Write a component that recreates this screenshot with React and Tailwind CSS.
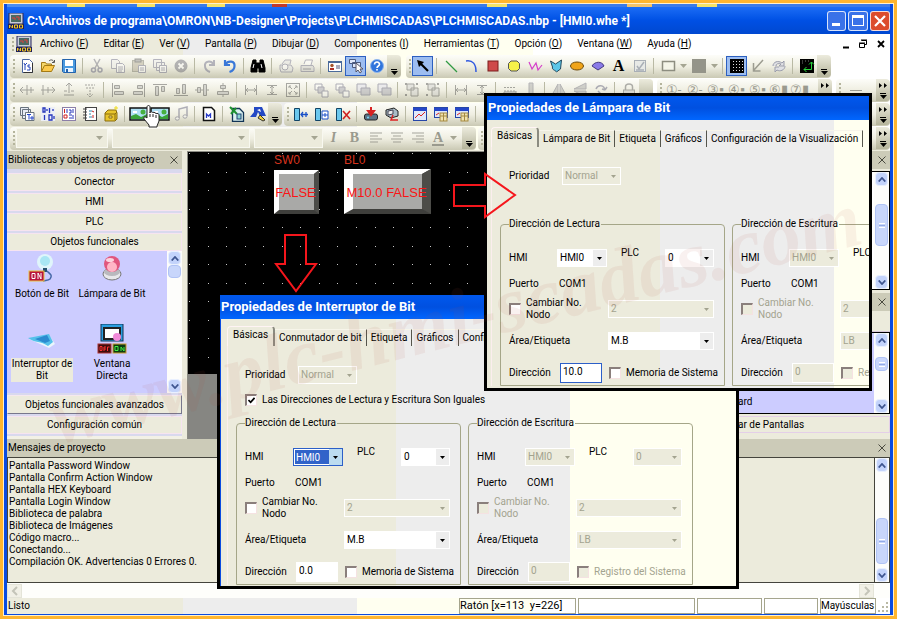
import React, { useId } from "react";

const Svg = ({ children, dim }) => (
  <svg viewBox="0 0 16 16" className={dim ? "h-4 w-4 opacity-40" : "h-4 w-4"} fill="none" stroke="#222" strokeWidth="1">
    {children}
  </svg>
);

const G = "#85857c";

const icons = {
  new: <Svg><path d="M3.5 1.5h7l3 3v10h-10z" fill="#fff" stroke="#4a66a0" /><path d="M13.5 5v9.500h-9" stroke="#333" /><path d="M5 5l1 2 2-2M6 7v5M9 7v2h2v3H8M11 7h-2" stroke="#2244bb" /></Svg>,
  open: <Svg><path d="M1.500 13.500v-9h4l1 1.500h5v2" fill="#f5d76a" stroke="#a47a14" /><path d="M1.500 13.500l3-6h10l-3 6z" fill="#fbc94b" stroke="#a47a14" /><path d="M9 3c2-2 4-1 5 1M14.500 2v2.500H12" stroke="#555" /></Svg>,
  save: <Svg><path d="M1.500 1.500h13v13h-12l-1-1z" fill="#4b9be0" stroke="#2463ac" /><rect x="4" y="2" width="8" height="6" fill="#fff" stroke="none" /><rect x="4" y="10" width="8" height="4" fill="#e8f3ff" stroke="none" /><rect x="5" y="11" width="2" height="3" fill="#2463ac" stroke="none" /></Svg>,
  cut: <Svg dim><path d="M5 1l5 9M11 1L6 10" stroke="#556" strokeWidth="1.500" /><circle cx="4.500" cy="12" r="2" stroke="#446" strokeWidth="1.500" /><circle cx="11" cy="12" r="2" stroke="#446" strokeWidth="1.500" /></Svg>,
  copy: <Svg dim><path d="M1.500 1.500h6l2 2v7h-8z" fill="#eee" stroke="#557" /><path d="M6.500 5.500h6l2 2v7h-8z" fill="#fff" stroke="#557" /><path d="M8 9h5M8 11h5M8 13h4" stroke="#557" /></Svg>,
  paste: <Svg dim><rect x="1.500" y="2.500" width="11" height="11" fill="#a9a089" stroke="#665" /><rect x="4" y="1" width="6" height="3" fill="#777" /><path d="M7.500 7.500h7v7h-7z" fill="#fff" stroke="#557" /><path d="M9 10h4M9 12h4" stroke="#557" /></Svg>,
  multi: <Svg dim><path d="M1.500 1.500h8v8h-8zM4.500 4.500h8v8h-8z" fill="#eee" stroke="#557" /><path d="M7.500 7.500h7v7h-7z" fill="#fff" stroke="#557" /><path d="M9 10h4M9 12h4" stroke="#557" /></Svg>,
  del: <Svg dim><circle cx="8" cy="8" r="6" fill="#556" stroke="#445" /><path d="M5.500 5.500l5 5M10.500 5.500l-5 5" stroke="#fff" strokeWidth="1.800" /></Svg>,
  redo: <Svg dim><path d="M13 2v5H8M12.500 6.500C10 2 3 3 4 8c0 3 2 5 5 6" stroke="#557" strokeWidth="2" /></Svg>,
  undo: <Svg><path d="M3 2v5h5M3.500 6.500C6 2 13 3 12.500 8c0 3-2 5-5 6" stroke="#3a78d8" strokeWidth="2.200" /></Svg>,
  find: <Svg><path d="M3 2h3v3h4V2h3l2 8v4H9v-4H7v4H1v-4z" fill="#000" stroke="#000" /><path d="M4 6l-1 4M11 6l1 4" stroke="#fff" /></Svg>,
  preview: <Svg dim><path d="M4 6l3-4h6l-1 4M2 7h11l2 3-1 4H3l-1-3z" fill="#ddd" stroke="#557" /><circle cx="7" cy="9" r="3" fill="#fff" stroke="#557" /></Svg>,
  print: <Svg dim><path d="M5 6l1.500-4h7L12 7" fill="#fff" stroke="#557" /><path d="M2 7.500h12l1 2v4H2z" fill="#ccc" stroke="#557" /><path d="M4 11h8" stroke="#334" /></Svg>,
  card: <Svg><rect x="1.500" y="3.500" width="13" height="10" fill="#fff" stroke="#4a6a9a" /><path d="M2 4.500h12" stroke="#4a6a9a" /><circle cx="5" cy="7.500" r="1.700" fill="#a4552d" stroke="none" /><path d="M3 12v-2h4v2z" fill="#b03028" stroke="none" /><path d="M9 8h4M9 10h4" stroke="#557" /></Svg>,
  select: <Svg><path d="M1.500 1.500h6v4h-6zM4.500 4.500h8v5h-8z" fill="#dfe8fa" stroke="#4a5a80" /><path d="M8 5l7 6h-3l1.500 3-1.500 1-2-3-2 2z" fill="#fff" stroke="#556" /></Svg>,
  help: <Svg><circle cx="8" cy="8" r="6.500" fill="#2f74dc" stroke="#8fb6ee" /><path d="M5.500 6.500c0-3.500 5-3 5 0 0 1.500-2.500 1.500-2.500 3.500" stroke="#fff" strokeWidth="1.600" /><rect x="7.200" y="11" width="1.600" height="1.600" fill="#fff" stroke="none" /></Svg>,
  pointer: <Svg><path d="M5 5l8 8" stroke="#000" strokeWidth="2.200" /><path d="M2 2l7 2-5 5z" fill="#000" stroke="none" /></Svg>,
  line: <Svg><path d="M3 3l11 11" stroke="#2f9a42" strokeWidth="1.300" /></Svg>,
  arc: <Svg><path d="M2 3c7-1 10 3 10 11" stroke="#2f58e0" strokeWidth="1.500" /></Svg>,
  rect: <Svg><rect x="3" y="3" width="10" height="10" fill="#cf4a4a" stroke="#7a1d1d" /></Svg>,
  rrect: <Svg><path d="M5 3h6l2.500 2.500v5L11 13H5l-2.500-2.500v-5z" fill="#f7f14a" stroke="#555" /></Svg>,
  zig: <Svg><path d="M2 4l3 7 4-6 2 7 4-5" stroke="#d53ecb" strokeWidth="1.200" /></Svg>,
  poly: <Svg><path d="M2.500 3l5 3 6-4-1 9-4 3c-1-2-5-2-4-5z" fill="#5cc6e8" stroke="#234a60" /></Svg>,
  ellipse: <Svg><ellipse cx="8" cy="8" rx="6.500" ry="4" fill="#f0a419" stroke="#6d4a0a" /></Svg>,
  fan: <Svg><path d="M2 8c3-5 10-5 12 0l-6 4z" fill="#8a7ae8" stroke="#453a80" /></Svg>,
  edit: <Svg><rect x="2.500" y="2.500" width="11" height="11" fill="#e7e9e6" stroke="#a9afb6" /><path d="M5 8l2 3 5-7M4 12h8" stroke="#a9afb6" strokeWidth="1.500" /></Svg>,
  outline: <Svg><rect x="2.500" y="3.500" width="12" height="9" stroke="#8d8d80" strokeWidth="1.500" fill="#f4f4e8" /></Svg>,
  fill: <Svg><rect x="1" y="1" width="14" height="14" fill="#949489" stroke="none" /></Svg>,
  grid: <Svg><rect x="1" y="1" width="14" height="14" fill="#000" stroke="none" /><path d="M4.500 3v11M7.500 3v11M10.500 3v11M13.500 3v11" stroke="#ddd" strokeDasharray="1 2" /></Svg>,
  sw: <Svg><path d="M13 2L4 12M3.500 5v8h7" stroke="#9c9c90" strokeWidth="1.500" /></Svg>,
  refresh: <Svg><path d="M2 8c0-4 5-6 9-3l2-2v5H8l2-2C7 5 5 6 5 8M14 8c0 4-5 6-8 4l-2 2V9h4" fill="#dfe0e4" stroke="#9a9cab" /></Svg>,
  origin: <Svg><rect x="1" y="1" width="14" height="14" fill="#000" stroke="none" /><path d="M12.500 4v7.500H5M10 6.500L12.500 4 15 6.500M7.500 9L5 11.500 7.500 14" stroke="#27d33b" /><path d="M3 3h7M3 5h3" stroke="#777" strokeDasharray="1 2" /></Svg>,
  a1: <Svg dim><path d="M1 8h14M4 5L1 8l3 3M8 3v10M12 5v6" stroke="#333" /></Svg>,
  a2: <Svg dim><path d="M1 8h14M12 5l3 3-3 3M3 3v10M8 5v6" stroke="#333" /></Svg>,
  a3: <Svg dim><path d="M8 1v10M5 4l3-3 3 3M3 13h10M3 9h3M10 9h3" stroke="#333" /></Svg>,
  a4: <Svg dim><path d="M8 5v10M5 12l3 3 3-3M3 3h10M4 6h2M10 6h2" stroke="#333" strokeDasharray="2 1" /></Svg>,
  l1: <Svg dim><path d="M2.500 1v14" stroke="#333" /><path d="M4.500 3.500h5v3h-5zM4.500 9.500h9v3h-9z" fill="#aaa" stroke="#333" /></Svg>,
  l2: <Svg dim><path d="M13.500 1v14" stroke="#333" /><path d="M6.500 3.500h5v3h-5zM2.500 9.500h9v3h-9z" fill="#aaa" stroke="#333" /></Svg>,
  l3: <Svg dim><path d="M1 2.500h14" stroke="#333" /><path d="M3.500 4.500h3v9h-3zM9.500 4.500h3v5h-3z" fill="#aaa" stroke="#333" /></Svg>,
  l4: <Svg dim><path d="M1 13.500h14" stroke="#333" /><path d="M3.500 6.500h3v5h-3zM9.500 2.500h3v9h-3z" fill="#aaa" stroke="#333" /></Svg>,
  l5: <Svg dim><path d="M1 8h14" stroke="#333" /><path d="M3.500 5.500h3v5h-3zM9.500 2.500h3v11h-3z" fill="#aaa" stroke="#333" /></Svg>,
  l6: <Svg dim><path d="M8 1v14" stroke="#333" /><path d="M5.500 3.500h5v3h-5zM2.500 9.500h11v3h-11z" fill="#aaa" stroke="#333" /></Svg>,
  hsp: <Svg dim><path d="M2.500 3v10M13.500 3v10M3 8h10M5 6L3 8l2 2M11 6l2 2-2 2" stroke="#333" /></Svg>,
  vsp: <Svg dim><path d="M3 3.500h10M3 12.500h10M8 4v8M6 6l2-2 2 2M6 10l2 2 2-2" stroke="#333" /></Svg>,
  full: <Svg dim><rect x="1.500" y="1.500" width="13" height="13" stroke="#333" /><path d="M4 4l3 3M12 4L9 7M4 12l3-3M12 12L9 9M4 6V4h2M10 4h2v2M4 10v2h2M10 12h2v-2" stroke="#333" /></Svg>,
  z1: <Svg dim><path d="M2 2h7v6H2z" fill="#fff" stroke="#446" /><path d="M5 5h6v6H5z" fill="#99a" stroke="#446" /><path d="M9 9h6v6H9z" fill="#fff" stroke="#446" /></Svg>,
  z2: <Svg dim><path d="M2 2h9v8H2z" fill="#dde" stroke="#446" /><path d="M6 6h9v7H6z" fill="#99a" stroke="#446" /></Svg>,
  grp: <Svg dim><path d="M3 2h7v6H3zM7 6h7v8H7z" fill="#ccc" stroke="#333" /><path d="M1 1h2v2H1zM12 1h2v2h-2zM1 12h2v2H1z" fill="#333" stroke="none" /></Svg>,
  bars: <Svg dim><path d="M2 5.500h12M2 9h12v3H2z" fill="#888" stroke="#333" strokeDasharray="2 1" /></Svg>,
  vbar: <Svg dim><path d="M6 1h4v11H6zM2 14h12" fill="#999" stroke="#556" /></Svg>,
  flipH: <Svg dim><path d="M7 2v11H1zM9 2v11h6z" fill="#999" stroke="#556" /></Svg>,
  flipV: <Svg dim><path d="M2 7h12V1zM2 9h12v6z" fill="#999" stroke="#556" /></Svg>,
  rot: <Svg dim><path d="M3 7c2-5 8-4 9 1M12 8l-3-1M12 8l2-3M5 9l5 5" stroke="#446" strokeWidth="1.500" /></Svg>,
  lock: <Svg dim><path d="M4.500 8V5c0-4 7-4 7 0v3" stroke="#444" strokeWidth="1.500" /><rect x="2.500" y="8" width="11" height="7" fill="#bbb" stroke="#444" /></Svg>,
  textlib: <Svg><path d="M1.500 1.500h8v8h-8zM3.500 3.500h8v9h-8z" fill="#e8ecf4" stroke="#69737e" /><path d="M6.500 6.500h8.500v8h-8.500z" fill="#fff" stroke="#69737e" /><path d="M8 8.500h4M10 8.500v5M12 11h2v2h-2z" stroke="#2244cc" /></Svg>,
  addr: <Svg><rect x="1" y="1" width="14" height="14" fill="#eceef6" stroke="none" /><path d="M3 2h2v4H3zM9.500 2v5M9 9h3v5H9zM4.500 9v5M7 3v2M13 3v2M14 10v3" stroke="#2636bb" strokeWidth="1.300" /></Svg>,
  data: <Svg><rect x="1.500" y="1.500" width="13" height="13" fill="#fff" stroke="#8c7fa8" /><path d="M3.500 3v4M3 9h3v3H3z" stroke="#d02222" /><path d="M6 3v4M8 4h2v3H8M12 3v4M8 9h3M8 12h5M12 9v2" stroke="#2636bb" /></Svg>,
  note: <Svg><rect x="3.500" y="1.500" width="11" height="13" fill="#fff" stroke="#444" /><path d="M1 3h4M1 6h4M1 9h4M1 12h4" stroke="#444" /><path d="M7 5h3M7 8h2M7 11h3" stroke="#38a" /><path d="M10 5l2 1M11 9v3" stroke="#c22" /></Svg>,
  box: <Svg><path d="M2 7l3-3h8l1 3v6l-2 2H2z" fill="#e8c52c" stroke="#8a6c0e" /><path d="M2 8h10v6M12 8l2-2" stroke="#8a6c0e" /><path d="M6 10h3v2H6z" fill="#fff7b0" stroke="#8a6c0e" /><path d="M13 0v4M11 2h4" stroke="#eedb20" /></Svg>,
  pic: <svg viewBox="0 0 20 14" className="h-[14px] w-5 shrink-0"><rect x="1" y="1" width="18" height="12" fill="#aee0f4" stroke="#111" strokeWidth="1.500" /><path d="M2 12V9l5-2 5 3 6-3v5z" fill="#3aa53a" /><circle cx="14" cy="5" r="2.500" fill="#47b040" /><path d="M4 5h4" stroke="#fff" strokeWidth="2" /></svg>,
  music: <Svg dim><path d="M6 12V3l8-2v9" stroke="#446" strokeWidth="1.500" /><ellipse cx="4.300" cy="12.500" rx="2" ry="1.700" fill="#fff" stroke="#446" /><ellipse cx="12" cy="10.500" rx="2" ry="1.700" fill="#fff" stroke="#446" /></Svg>,
  macro: <Svg><path d="M2.500 1.500h8l3 3v10h-11z" fill="#fff" stroke="#111" strokeWidth="1.500" /><path d="M5.500 12V8l2 2 2-2v4" stroke="#2438c8" strokeWidth="1.300" /></Svg>,
  xls: <Svg><path d="M3.500 2.500h7l4 4v9h-11z" fill="#d9f1ef" stroke="#135" strokeWidth="1.300" /><path d="M1 1l7 7M7 2L2 8" stroke="#1d9030" strokeWidth="2" /><rect x="8" y="8" width="4" height="5" fill="#8ad4d0" stroke="#247" /></Svg>,
  shapes: <Svg><path d="M4 1h8l4 9H10L8 6l-2 5H0l4-5z" fill="#2348c4" stroke="none" /><path d="M7 4l3-1 1 3z" fill="#fff" stroke="none" /><path d="M10 9l5 5-2 1-5-3z" fill="#f2cf3c" stroke="#333" /></Svg>,
  win1: <Svg><path d="M1.500 2.500h5v12h-5z" fill="#6cc8ee" stroke="#146" /><path d="M8 8.500h7M10 6l-2 2.500 2 2.500M13 6v5" stroke="#1a50c8" strokeWidth="1.300" /></Svg>,
  win2: <Svg><path d="M1.500 2.500h5v12h-5z" fill="#6cc8ee" stroke="#146" /><path d="M8 5h6v8H8zM8 9h6M11 7v4" fill="#fff" stroke="#1a50c8" /></Svg>,
  win3: <Svg><path d="M1.500 2.500h5v12h-5z" fill="#6cc8ee" stroke="#146" /><path d="M8 5l7 8M15 5l-7 8" stroke="#cf2020" strokeWidth="1.600" /></Svg>,
  down: <Svg><rect x="1.500" y="8" width="13" height="6" rx="2" fill="#5d7284" stroke="#222" /><path d="M8 1v5M5 5l3 4 3-4z" fill="#d82222" stroke="#d82222" strokeWidth="2" /><circle cx="5" cy="11.500" r="1" fill="#7df" stroke="none" /></Svg>,
  sim: <Svg><path d="M2 4l8-2 4 3v5l-7 2-5-3z" fill="#a9bcc6" stroke="#222" /><path d="M4 5l5-1v4l-5 1z" fill="#eee" stroke="#445" /><path d="M9 9l-2 5h7" stroke="#d22" strokeWidth="1.500" /></Svg>,
  c1: <Svg><rect x="1.500" y="1.500" width="13" height="13" fill="#dfe8fa" stroke="#2546a8" /><path d="M1 3.500h14" stroke="#2546c8" strokeWidth="3" /><path d="M3 12l4-4 2 2 4-4" stroke="#d22" /></Svg>,
  c2: <Svg><rect x="1.500" y="1.500" width="13" height="10" fill="#dfe8fa" stroke="#2546a8" /><path d="M1 3.500h14" stroke="#2546c8" strokeWidth="3" /><rect x="7" y="7" width="7" height="8" fill="#efe2b0" stroke="#a58a40" /><path d="M3 9l3-2" stroke="#d22" /><path d="M7 10h7M10.500 7v8" stroke="#a58a40" /></Svg>,
  letter: <span className="font-['Liberation_Serif'] text-[16px] font-bold">A</span>,
};

const Slot = ({ name, active }) => (
  <button
    type="button"
    aria-label={name}
    className={
      active
        ? "flex h-5 w-[21px] shrink-0 items-center justify-center border border-[#2c5fc0] bg-[#9dbdf0]"
        : "flex h-5 w-[21px] shrink-0 items-center justify-center"
    }
  >
    {icons[name]}
  </button>
);
const Sep = () => (
  <span className="flex w-[7px] shrink-0 justify-center">
    <span className="h-4 w-px bg-[#b9b9a4]" />
  </span>
);
const Grip = () => (
  <span className="flex w-1 shrink-0 flex-col items-center gap-[2px]">
    {[0, 1, 2, 3].map((i) => (
      <span key={i} className="h-[2px] w-[2px] bg-[#b4b49c]" />
    ))}
  </span>
);
const Tri = ({ dark }) => (
  <svg viewBox="0 0 7 4" className="h-1 w-[7px]">
    <path d="M0 0h7L3.500 4z" fill={dark ? "#000" : "#a5a592"} />
  </svg>
);
const Drop = () => (
  <span className="flex w-[10px] shrink-0 justify-center">
    <Tri />
  </span>
);
const More = ({ wide }) => (
  <button type="button" aria-label="Más botones" className="flex h-[22px] w-[14px] shrink-0 flex-col items-center justify-end gap-px rounded-r bg-gradient-to-b from-[#ecebdd] to-[#b5b49b] pb-[2px]">
    {wide && (
      <svg viewBox="0 0 8 5" className="mb-1 h-[5px] w-2">
        <path d="M0 0l3 2.500L0 5zM5 0l3 2.500L5 5z" fill="#000" />
      </svg>
    )}
    <span className="h-px w-[6px] bg-black" />
    <Tri dark />
  </button>
);
const Bar = ({ items, children, grow, more = true, wide }) => (
  <div
    className={
      "flex h-[23px] items-center rounded bg-gradient-to-b from-[#fdfdf9] via-[#efeee1] to-[#cac9b4] pl-[2px] " +
      (grow ? "min-w-0 flex-1 overflow-hidden" : "shrink-0")
    }
  >
    <Grip />
    {items && items.split(" ").map((n, i) =>
      n === "|" ? <Sep key={i} /> : n === "v" ? <Drop key={i} /> : <Slot key={i} name={n.replace("*", "")} active={n.endsWith("*")} />
    )}
    {children}
    {grow && <span className="flex-1" />}
    {more && <More wide={wide} />}
  </div>
);

const AppIcon = () => (
  <svg viewBox="0 0 16 16" className="h-4 w-4 shrink-0">
    <rect x="1" y="0" width="14" height="11" fill="#c9ccd8" stroke="#22245a" />
    <rect x="3" y="2" width="10" height="7" fill="#4a6a62" />
    <path d="M4 5h3v2M8 4h3v3" stroke="#e03c3c" fill="none" />
    <rect x="0" y="11" width="16" height="5" fill="#20205a" />
    <path d="M1.500 15v-3l3 3v-3M6.500 12v3h3v-3zM11.500 12v3h3v-3z" stroke="#f2c820" fill="none" />
  </svg>
);

const Menu = ({ t, k }) => (
  <button type="button" className="whitespace-nowrap">
    {t} (<u>{k}</u>)
  </button>
);

const ScrollBtn = ({ up }) => (
  <button type="button" aria-label={up ? "Subir" : "Bajar"} className="flex h-[14px] w-full shrink-0 items-center justify-center rounded-sm border border-[#e9f0ff] bg-[#c3d3fb]">
    <svg viewBox="0 0 8 5" className="h-[5px] w-2">
      <path d={up ? "M.7 4.500L4 1l3.300 3.500" : "M.7.5L4 4 7.300.5"} stroke="#3e5590" strokeWidth="1.800" fill="none" />
    </svg>
  </button>
);
const Thumb = ({ className, plain }) => (
  <div className={"flex w-full shrink-0 flex-col items-center justify-center gap-px rounded-sm border border-[#b0c3f5] bg-[#c8d6fb] " + className}>
    {!plain && (
      <>
        <span className="h-px w-[6px] bg-white" />
        <span className="h-px w-[6px] bg-[#93abe8]" />
        <span className="h-px w-[6px] bg-white" />
      </>
    )}
  </div>
);
const Scroll = ({ pre, thumb, plain, className = "" }) => (
  <div className={"flex w-[15px] shrink-0 flex-col bg-[#fdfdfb] px-px " + className}>
    <ScrollBtn up />
    <div className={pre} />
    <Thumb className={thumb} plain={plain} />
    <div className="flex-1" />
    <ScrollBtn />
  </div>
);

const Close = () => (
  <button type="button" aria-label="Cerrar" className="flex h-4 w-4 items-center justify-center">
    <svg viewBox="0 0 8 8" className="h-2 w-2">
      <path d="M.5.5l7 7M7.500.5l-7 7" stroke="#4a4a40" fill="none" />
    </svg>
  </button>
);
const Head = ({ children, className = "" }) => (
  <div className={"flex h-[18px] shrink-0 items-center justify-between bg-[#cccbb8] pl-px " + className}>
    <h2 className="whitespace-nowrap">{children}</h2>
    <Close />
  </div>
);
const Section = ({ children, raised }) => (
  <button
    type="button"
    className={
      raised
        ? "h-[19px] w-full shrink-0 border border-[#f6e8ee] border-r-[#77778c] border-b-[#77778c] bg-[#ecebdc]"
        : "h-[18px] w-full shrink-0 border border-[#f6e4f0] bg-[#ecebdc]"
    }
  >
    {children}
  </button>
);

const Select = ({ label, value, className, off, focus }) => (
  <span className={"relative flex h-[18px] shrink-0 border " + (focus ? "border-[#2c5fc8] " : "border-white ") + className}>
    <select
      aria-label={label}
      disabled={off}
      className={
        "w-full appearance-none leading-4 opacity-100 outline-none " +
        (focus ? "border border-r-2 border-white bg-[#3163c9] pl-px text-white" : off ? "bg-[#ecebdc] pl-[2px] text-[#a3a38f]" : "bg-white pl-[2px] text-black")
      }
      defaultValue={value}
    >
      <option>{value}</option>
    </select>
    <span
      className={
        "pointer-events-none absolute inset-y-0 right-0 flex w-[13px] items-center justify-center " +
        (focus ? "bg-[#bcdcf0]" : off ? "" : "bg-[#ededed]")
      }
    >
      <svg viewBox="0 0 5 3" className="h-[3px] w-[5px]">
        <path d="M0 0h5L2.500 3z" fill={off ? "#a3a38f" : "#000"} />
      </svg>
    </span>
  </span>
);

const Check = ({ children, off, on, className = "" }) => {
  const id = useId();
  return (
    <span className={"flex shrink-0 items-center gap-[5px] " + className}>
      <span className="relative flex">
        <input
          id={id}
          type="checkbox"
          defaultChecked={on}
          disabled={off}
          className={"h-3 w-3 appearance-none border border-[#f5e2e2] border-t-[#8a7f7c] border-l-[#8a7f7c] border-t-2 border-l-2 " + (off ? "bg-[#ecebdc]" : "bg-white")}
        />
        {on && (
          <svg viewBox="0 0 8 8" className="pointer-events-none absolute top-[3px] left-[3px] h-[7px] w-[7px]">
            <path d="M.5 3.500L3 6l4.500-5" stroke="#000" strokeWidth="2" fill="none" />
          </svg>
        )}
      </span>
      <label htmlFor={id} className={"leading-3 whitespace-nowrap " + (off ? "text-[#a3a38f]" : "")}>
        {children}
      </label>
    </span>
  );
};

const Group = ({ title, off, area, addr, mem, hmiFocus, addrFocus }) => {
  const id = useId();
  return (
    <fieldset className="w-[225px] min-w-0 shrink-0 rounded-t border border-[#a5a688] pt-[14px] pl-2">
      <legend className="h-[14px] pr-px leading-[14px]">{title}</legend>
      <div className="flex h-[26px] items-center">
        <span className="w-12">HMI</span>
        <Select label="HMI" value="HMI0" off={off} focus={hmiFocus} className="w-[50px]" />
        <span className="w-[58px] self-start pl-[14px] leading-4">PLC</span>
        <Select label="PLC" value="0" off={off} className="w-[49px]" />
      </div>
      <div className="flex h-[26px] items-center">
        <span className="w-[50px]">Puerto</span>
        <span>COM1</span>
      </div>
      <div className="flex h-6 items-center">
        <Check off={off} className="w-[99px]">
          Cambiar No.
          <br />
          Nodo
        </Check>
        <Select label="Nodo" value="2" off className="w-[106px]" />
      </div>
      <div className="flex h-10 items-center">
        <span className="w-[99px]">Área/Etiqueta</span>
        <Select label="Área/Etiqueta" value={area} off={off} className="w-[106px]" />
      </div>
      <div className="flex h-6 items-center">
        <label htmlFor={id} className="w-[51px]">
          Dirección
        </label>
        <input
          id={id}
          type="text"
          defaultValue={addr}
          disabled={off}
          className={
            "mr-[7px] h-5 w-[42px] border pb-1 pl-[2px] outline-none " +
            (addrFocus ? "border-[#2c5fc8] bg-white" : off ? "border-white bg-[#ecebdc] text-[#a3a38f]" : "border-white bg-white")
          }
        />
        <Check off={off}>{mem}</Check>
      </div>
    </fieldset>
  );
};

const Dialog = ({ title, tabs, className, body, children, same }) => (
  <section aria-label={title} className={"absolute flex flex-col overflow-hidden border-[3px] border-black " + className}>
    <h2 className="flex h-6 shrink-0 items-center bg-gradient-to-b from-[#0058ee] via-[#0050e0] to-[#0066ff] pl-px text-[13px] font-bold whitespace-nowrap text-white">
      {title}
    </h2>
    <div className={"min-h-0 flex-1 " + body}>
      <div role="tablist" className="flex items-end pt-[7px] pl-1">
        {tabs.map((t, i) => (
          <button
            key={t}
            type="button"
            role="tab"
            aria-selected={i === 0}
            className={
              i === 0
                ? "h-5 shrink-0 rounded-t border-t border-r-2 border-l border-[#fff4f4] border-r-[#8b8b80] px-[5px] pb-1 whitespace-nowrap"
                : "h-[17px] shrink-0 border-t border-r border-[#f7f5ea] border-r-[#55554c] px-1 whitespace-nowrap"
            }
          >
            {t}
          </button>
        ))}
      </div>
      <div className="ml-1 border-l border-[#fbeeee] pt-5">
        <div className="flex h-[18px] items-center pl-[17px]">
          <span className="w-[53px]">Prioridad</span>
          <Select label="Prioridad" value="Normal" off className="w-[59px]" />
        </div>
        <div className="flex h-8 items-center pl-[17px]">{same && <Check on>{same}</Check>}</div>
        <div className="flex gap-[7px] pl-2">{children}</div>
      </div>
    </div>
  </section>
);

const dots = [];
for (let r = 0; r < 13; r++)
  for (let c = 0; c < 30; c++) dots.push([Math.round(1 + c * 18.55), Math.round(1 + r * 18.5)]);

const Bevel = ({ x, y, w, h, b, d, text }) => (
  <g>
    <rect x={x} y={y} width={w} height={h} fill="#3f3f3c" />
    <path d={`M${x} ${y}h${w}l${-b} ${d}H${x + b}V${y + h - d}L${x} ${y + h}z`} fill="#fff" />
    <path d={`M${x + w} ${y}v${h}l${-b} ${-d}V${y + d}z`} fill="#4c4c48" />
    <rect x={x + b} y={y + d} width={w - 2 * b} height={h - 2 * d} fill="#a9a9a7" />
    <text x={x + w / 2 - 1} y={y + h / 2 + 5} textAnchor="middle" fontSize="13" fill="#fb1414">
      {text}
    </text>
  </g>
);

const messages = [
  "Pantalla Password Window",
  "Pantalla Confirm Action Window",
  "Pantalla HEX Keyboard",
  "Pantalla Login Window",
  "Biblioteca de palabra",
  "Biblioteca de Imágenes",
  "Código macro...",
  "Conectando...",
  "Compilación OK. Advertencias 0 Errores 0.",
];

const Obj = ({ children, label, sel }) => (
  <div className="flex w-[70px] flex-col items-center gap-1 text-center">
    <svg viewBox="0 0 30 30" className="h-[30px] w-[30px]">
      {children}
    </svg>
    <span className={"leading-3 whitespace-nowrap " + (sel ? "bg-[#ecebdc] px-px" : "")}>{label}</span>
  </div>
);

export default function App() {
  return (
    <div className="relative flex min-h-screen flex-col overflow-hidden border-[3px] border-[#ffb52e] bg-[#ecebdc] font-['Roboto','Liberation_Sans',sans-serif] text-[10px] leading-[14px] text-black">
      <div className="flex flex-1 flex-col border border-[#fff0cc]">
        <div className="flex flex-1 flex-col border-x-[3px] border-b border-[#0a4be0]">
          <div className="h-[3px] bg-[linear-gradient(90deg,#4a8df0_0_60px,#f3e36a_60px_78px,#3b7be8_78px_130px,#f3e36a_130px_148px,#3b7be8_148px_200px,#f3e36a_200px_218px,#3b7be8_218px_265px,#c23a2a_265px_280px,#3b7be8_280px_480px,#f3e36a_480px_500px,#3b7be8_500px_620px,#f3c36a_620px_645px,#3b7be8_645px_690px,#f3e36a_690px_710px,#3b7be8_710px)]" />
          <header className="flex h-[27px] items-center gap-[3px] bg-gradient-to-b from-[#1b6cf5] via-[#0050e4] to-[#0048d0] pl-px text-white">
            <AppIcon />
            <h1 className="min-w-0 flex-1 truncate text-[12px] leading-5 font-bold">
              C:\Archivos de programa\OMRON\NB-Designer\Projects\PLCHMISCADAS\PLCHMISCADAS.nbp - [HMI0.whe *]
            </h1>
            <div className="flex gap-[2px]">
              <button type="button" aria-label="Minimizar" className="flex h-5 w-[19px] items-end rounded-[3px] border border-white/80 bg-[#3a72e8] pb-1 pl-1">
                <span className="h-[3px] w-2 bg-white" />
              </button>
              <button type="button" aria-label="Restaurar" className="flex h-5 w-[20px] items-center justify-center rounded-[3px] border border-white/80 bg-[#3a72e8]">
                <span className="h-[11px] w-3 border border-t-[3px] border-white" />
              </button>
              <button type="button" aria-label="Cerrar" className="flex h-5 w-5 items-center justify-center rounded-[3px] border border-white/80 bg-[#dc4c2c]">
                <svg viewBox="0 0 12 12" className="h-3 w-3">
                  <path d="M1 1l10 10M11 1L1 11" stroke="#fff" strokeWidth="2.200" />
                </svg>
              </button>
            </div>
          </header>

          <div className="bg-[linear-gradient(90deg,#ecebdc_0_176px,#ededed_176px_350px,#fffff0_350px_526px,#fff_526px)]">
            <nav className="flex h-5 items-center pl-1">
              <Grip />
              <span className="mr-2 ml-[1px]">
                <AppIcon />
              </span>
              <div className="flex gap-[15px]">
                <Menu t="Archivo" k="F" />
                <Menu t="Editar" k="E" />
                <Menu t="Ver" k="V" />
                <Menu t="Pantalla" k="P" />
                <Menu t="Dibujar" k="D" />
                <Menu t="Componentes" k="I" />
                <Menu t="Herramientas" k="T" />
                <Menu t="Opción" k="O" />
                <Menu t="Ventana" k="W" />
                <Menu t="Ayuda" k="H" />
              </div>
              <svg viewBox="0 0 44 10" className="mr-1 ml-auto h-[10px] w-11">
                <path d="M1 8.500h6" stroke="#000" strokeWidth="2" />
                <path d="M19.500 1.500h5v4h-2M17.500 4.500h5v4h-5z M17 4h6M19 1h6" stroke="#000" fill="none" />
                <path d="M36 2l6 6M42 2l-6 6" stroke="#000" strokeWidth="1.800" />
              </svg>
            </nav>
            <div className="flex h-6 items-center gap-[5px] pl-[3px]">
              <Bar items="new open save | cut copy paste multi del | redo undo | find | preview print | card select* help" />
              <Bar items="pointer* | line arc rect rrect zig poly ellipse fan letter edit | outline v fill v | grid* sw refresh | origin" />
            </div>
            <div className="flex h-6 items-center gap-1 pl-[3px]">
              <Bar items="a1 a2 a3 a4 | l1 l2 l3 l4 l5 l6 | hsp vsp full | z1 z1 z2 z2 | grp grp | hsp vsp | bars vbar | flipH flipV rot | lock" />
              <Bar wide>
                {["①-", "②-", "③▪", "④▪", "⑤▪", "⑥▮", "⑦▮"].map((n) => (
                  <button type="button" key={n} className="w-[21px] text-[13px] whitespace-nowrap text-[#9a9a8e]">
                    {n}
                  </button>
                ))}
                <span className="w-2" />
              </Bar>
              <Bar grow wide>
                <span className="ml-2 h-px w-3 bg-[#9a9a8e]" />
              </Bar>
            </div>
            <div className="flex h-6 items-center gap-[2px] pl-[3px]">
              <Bar items="textlib addr data note box | pic pic music | macro | xls shapes" />
              <Bar grow wide items="win1 win2 win3 | down sim | c1 c2 c2 |" />
            </div>
            <div className="flex h-6 items-center gap-[2px] pl-[3px]">
              <Bar>
                <select aria-label="Fuente" disabled className="h-5 w-[92px] appearance-none border border-[#f8f8f0] bg-[#ecebdc]" />
                <span className="-ml-3 flex w-4"><Tri /></span>
                <select aria-label="Estilo" disabled className="h-5 w-[138px] appearance-none border border-[#f8f8f0] bg-[#ecebdc]" />
                <span className="-ml-3 flex w-4"><Tri /></span>
                <select aria-label="Tamaño" disabled className="h-5 w-[69px] appearance-none border border-[#f8f8f0] bg-[#ecebdc]" />
                <span className="-ml-3 flex w-3"><Tri /></span>
                <button type="button" className="w-[21px] font-['Liberation_Serif'] text-[14px] font-bold text-[#9a9a8e] italic">I</button>
                <button type="button" className="w-[21px] font-['Liberation_Serif'] text-[14px] font-bold text-[#9a9a8e]">B</button>
                {["M2 3h12M2 6h8M2 9h12M2 12h8", "M2 3h12M4 6h8M2 9h12M4 12h8", "M2 3h12M6 6h8M2 9h12M6 12h8"].map((d) => (
                  <button type="button" aria-label="Alinear" key={d} className="flex w-[21px] justify-center">
                    <svg viewBox="0 0 16 16" className="h-4 w-4"><path d={d} stroke={G} opacity=".7" /></svg>
                  </button>
                ))}
                <button type="button" className="mx-1 w-3 border-b-2 border-[#9a9a8e] font-['Liberation_Serif'] text-[14px] leading-[13px] font-bold text-[#9a9a8e]">A</button>
                <Drop />
                <span className="w-1" />
              </Bar>
              <Bar grow wide />
            </div>
          </div>

          <main className="flex min-h-0 flex-1 pt-px">
            <aside className="flex w-[175px] shrink-0 flex-col gap-[2px] bg-[#d9d9ee] text-center">
              <Head className="mb-[2px]">Bibliotecas y objetos de proyecto</Head>
              <Section>Conector</Section>
              <Section>HMI</Section>
              <Section>PLC</Section>
              <Section>Objetos funcionales</Section>
              <div className="-mt-[2px] flex flex-1 bg-[#ccccff]">
                <div className="flex-1 pt-[3px]">
                  <div className="flex h-[70px]">
                    <Obj label="Botón de Bit">
                      <circle cx="18" cy="8" r="8" fill="#dff5fb" />
                      <circle cx="18" cy="7" r="5" fill="#a9e6f4" />
                      <path d="M16 14h4v4h-4z" fill="#27506e" />
                      <path d="M20 17c3 3 6 4 3 8-2 2-5 1-7 2" stroke="#4668a8" strokeWidth="1.500" fill="none" />
                      <rect x="2" y="17" width="15" height="10" fill="#b8123c" stroke="#e8c040" />
                      <path d="M5 19.500h3v5h-3zM11 25v-6l3 6v-6" stroke="#fff" fill="none" />
                    </Obj>
                    <Obj label="Lámpara de Bit">
                      <ellipse cx="15" cy="20" rx="9" ry="6" fill="#e8e8ea" stroke="#777" />
                      <ellipse cx="15" cy="18" rx="8" ry="4" fill="#b9b9bd" />
                      <circle cx="15" cy="10" r="8" fill="#e0567e" />
                      <circle cx="15" cy="13" r="5" fill="#ffb6c6" />
                      <ellipse cx="13" cy="6" rx="4" ry="2" fill="#fbd4de" />
                    </Obj>
                  </div>
                  <div className="flex">
                    <Obj label={<>Interruptor de<br />Bit</>} sel>
                      <path d="M2 15l20-4 6 9-6 4z" fill="#e9f6fb" />
                      <path d="M1 14l21-4 4 8-5 4C14 17 8 19 1 14z" fill="#55c1ea" />
                      <path d="M8 15l12-4 3 6-5 2z" fill="#2b8bd0" />
                    </Obj>
                    <Obj label={<>Ventana<br />Directa</>}>
                      <rect x="4" y="0" width="22" height="17" fill="#2a9fe0" stroke="#135" />
                      <rect x="7" y="4" width="16" height="11" fill="#fff" stroke="#222" strokeWidth="2" />
                      <circle cx="20" cy="13" r="4" fill="#f08ad8" />
                      <rect x="1" y="20" width="13" height="9" fill="#3c0d0d" stroke="#a33" />
                      <rect x="16" y="20" width="13" height="9" fill="#0d3c12" stroke="#c93" />
                      <path d="M3 22.500h2v4h-2zM7 27v-4h2M7 25h2M10.500 27v-4h2" stroke="#f33" fill="none" />
                      <path d="M18 22.500h3v4h-3zM24 27v-4l3 4v-4" stroke="#4e4" fill="none" />
                    </Obj>
                  </div>
                </div>
                <Scroll pre="h-0" thumb="h-[13px]" plain />
              </div>
              <Section raised>Objetos funcionales avanzados</Section>
              <Section>Configuración común</Section>
              <div className="h-[3px] bg-[#f2f1e6]" />
            </aside>
            <div className="ml-[5px] flex min-w-0 flex-1 flex-col overflow-hidden border-t border-l border-[#8c8c84] bg-[#868682]">
              <svg className="h-[222px] w-full shrink-0 bg-black font-['Liberation_Sans']">
                {dots.map(([x, y]) => (
                  <rect key={x + "-" + y} x={x} y={y} width="1" height="1" fill="#c8c8c8" />
                ))}
                <text x="86" y="12" fontSize="12" fill="#d8341e">SW0</text>
                <text x="156" y="12" fontSize="12" fill="#d8341e">BL0</text>
                <Bevel x={86} y={18} w={45} h={44} b={5} d={4} text="FALSE" />
                <Bevel x={156} y={17} w={87} h={45} b={9} d={5} text="M10.0 FALSE" />
              </svg>
            </div>
            <aside className="flex w-[158px] shrink-0 flex-col bg-[#ecebdc]">
              <Head>{""}</Head>
              <div className="mt-[2px] flex h-[119px] justify-end border border-black bg-white">
                <Scroll pre="h-[18px]" thumb="h-[42px]" />
              </div>
              <Head className="mt-[3px]">{""}</Head>
              <div className="h-[21px] border-b border-[#d8c8d8]" />
              <div className="flex flex-1 border border-black bg-[#ccccff]">
                <div className="flex flex-1 flex-col justify-end pb-1 pl-[5px]">ard</div>
                <Scroll pre="h-[10px]" thumb="h-[14px]" />
              </div>
              <button type="button" className="mt-[2px] mb-[6px] h-[17px] border border-[#e4cfe8] pl-[5px] text-left">ar de Pantallas</button>
            </aside>
          </main>

          <section aria-label="Mensajes de proyecto" className="shrink-0">
            <Head>Mensajes de proyecto</Head>
            <div className="flex h-[126px] border border-[#44443c]">
              <ul className="flex-1 pt-[2px] pl-px leading-3">
                {messages.map((m) => (
                  <li key={m}>{m}</li>
                ))}
              </ul>
              <Scroll pre="h-[46px]" thumb="h-[46px]" className="border-l border-[#44443c]" />
            </div>
          </section>
          <div className="flex h-[15px] shrink-0 items-center justify-between bg-[#fefefb] pr-4 text-[#c4c4b8]">
            {["M6 1L2 5l4 4", "M2 1l4 4-4 4"].map((d) => (
              <button type="button" key={d} aria-label="Desplazar" className="flex h-[14px] w-[15px] items-center justify-center border border-[#e4e4d8] bg-[#f1f0e6]">
                <svg viewBox="0 0 8 10" className="h-[10px] w-2"><path d={d} stroke="#c4c4b8" strokeWidth="2" fill="none" /></svg>
              </button>
            ))}
          </div>
          <footer className="flex h-4 shrink-0 items-stretch gap-[2px] bg-[linear-gradient(90deg,#ecebdc_0_176px,#ededed_176px_350px,#fffff0_350px_526px,#fff_526px)] leading-[14px]">
            <span className="flex-1 pt-px pl-px">Listo</span>
            <span className="w-[117px] border border-[#a5a58c] text-[11px] whitespace-nowrap">Ratón [x=113&nbsp; y=226]</span>
            <span className="w-[117px] border border-[#a5a58c]" />
            <span className="w-[65px] border border-[#a5a58c]" />
            <span className="w-[54px] border border-[#a5a58c]" />
            <span className="w-[56px] border border-[#a5a58c]">Mayúsculas</span>
            <svg viewBox="0 0 12 14" className="h-[14px] w-3">
              <path d="M8 4h2v2H8zM4 8h2v2H4zM8 8h2v2H8zM0 12h2v2H0zM4 12h2v2H4zM8 12h2v2H8z" fill="#b9b9a4" />
            </svg>
          </footer>
        </div>
      </div>

      <Dialog
        title="Propiedades de Interruptor de Bit"
        tabs={["Básicas", "Conmutador de bit", "Etiqueta", "Gráficos", "Configuración de la Visualización"]}
        same="Las Direcciones de Lectura y Escritura Son Iguales"
        className="top-[292px] left-[214px] h-[294px] w-[522px] border-t-0"
        body="border-l border-[#0a4be0] bg-[linear-gradient(90deg,#ecebdc_0_175px,#ededed_175px_349px,#fffff0_349px)] pl-[2px]"
      >
        <Group title="Dirección de Lectura" area="M.B" addr="0.0" mem="Memoria de Sistema" hmiFocus />
        <Group title="Dirección de Escritura" area="LB" addr="0" mem="Registro del Sistema" off />
      </Dialog>
      <Dialog
        title="Propiedades de Lámpara de Bit"
        tabs={["Básicas", "Lámpara de Bit", "Etiqueta", "Gráficos", "Configuración de la Visualización"]}
        className="top-[90px] left-[481px] h-[298px] w-[388px]"
        body="bg-[linear-gradient(90deg,#ecebdc_0_173px,#ededed_173px_347px,#fffff0_347px)]"
      >
        <Group title="Dirección de Lectura" area="M.B" addr="10.0" mem="Memoria de Sistema" addrFocus />
        <Group title="Dirección de Escritura" area="LB" addr="0" mem="Registro del Sistema" off />
      </Dialog>

      <svg viewBox="0 0 66 48" className="pointer-events-none absolute top-[169px] left-[449px] h-12 w-[66px]">
        <path d="M2 13h31V2l30 21-30 22V34H2z" fill="none" stroke="#f5161c" strokeWidth="2" />
      </svg>
      <svg viewBox="0 0 46 62" className="pointer-events-none absolute top-[229px] left-[270px] h-[62px] w-[46px]">
        <path d="M12 3h21v29h10L23 59 3 32h9z" fill="none" stroke="#f5161c" strokeWidth="2" />
      </svg>
      <svg viewBox="0 0 20 24" className="pointer-events-none absolute top-[101px] left-[138px] h-6 w-5">
        <path d="M6 14V3c0-2 3-2 3 0v6c0-2 3-1 3 0 0-1 3-1 3 1 0-1 3-1 3 1v6l-2 5v1H8v-2L3 15c-1-2 1-3 3-1z" fill="#fff" stroke="#222" />
        <path d="M9 10v3M12 10v3M15 11v3" stroke="#222" />
      </svg>
      <p className="pointer-events-none absolute top-[374px] left-[58px] origin-bottom-left -rotate-[14deg] font-['Liberation_Serif'] text-[80px] leading-[80px] font-bold whitespace-nowrap text-[#b4503c]/8 italic">
        www.plc-hmi-scadas.com
      </p>
    </div>
  );
}
